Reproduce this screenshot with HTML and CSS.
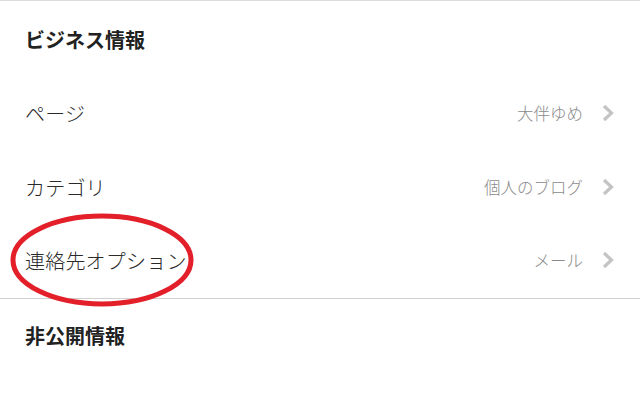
FILE: index.html
```html
<!DOCTYPE html>
<html lang="ja">
  <head>
    <meta charset="UTF-8" />
    <meta name="viewport" content="width=device-width, initial-scale=1.0" />
    <title>ビジネス情報</title>
    <link rel="stylesheet" href="styles.css">
  </head>
  <body>
    <div class="settings">
      <h2 class="section-title">ビジネス情報</h2>
      <div class="row">
        <span class="label">ページ</span>
        <span class="value">大伴ゆめ</span>
        <svg class="chevron" viewBox="0 0 12 18"><path d="M2 2 L9.5 9 L2 16" /></svg>
      </div>
      <div class="row">
        <span class="label">カテゴリ</span>
        <span class="value">個人のブログ</span>
        <svg class="chevron" viewBox="0 0 12 18"><path d="M2 2 L9.5 9 L2 16" /></svg>
      </div>
      <div class="row last">
        <span class="label">連絡先オプション</span>
        <span class="value">メール</span>
        <svg class="chevron" viewBox="0 0 12 18"><path d="M2 2 L9.5 9 L2 16" /></svg>
        <svg class="circle" viewBox="0 0 186 96">
          <ellipse cx="93" cy="48" rx="89" ry="44" />
        </svg>
      </div>
      <h2 class="section-title private">非公開情報</h2>
    </div>
  </body>
</html>
```

FILE: styles.css
```css
* {
  box-sizing: border-box;
  margin: 0;
  padding: 0;
}

body {
  font-family: "Noto Sans CJK JP", "Noto Sans", sans-serif;
  background: #fff;
  color: #333;
  width: 640px;
  height: 400px;
  overflow: hidden;
}

.settings {
  border-top: 1px solid #dcdcdc;
}

.section-title {
  font-size: 20px;
  font-weight: bold;
  color: #222;
  height: 75px;
  line-height: 78px;
  padding-left: 25px;
}

.section-title.private {
  line-height: 74px;
}

.row {
  position: relative;
  display: flex;
  align-items: center;
  height: 74px;
  padding: 0 26px 0 25px;
}

.row.last {
  height: 75px;
  padding-bottom: 2px;
  border-bottom: 1px solid #d0d0d0;
}

.label {
  flex: 1;
  font-size: 20px;
  font-weight: 300;
  color: #2a2a2a;
  letter-spacing: 0.2px;
}

.value {
  font-size: 16.5px;
  font-weight: 300;
  color: #8a8a8a;
  margin-right: 19px;
}

.chevron {
  width: 12px;
  height: 18px;
}

.chevron path {
  fill: none;
  stroke: #c4c4c4;
  stroke-width: 3.2;
}

.circle {
  position: absolute;
  left: 9px;
  top: -12px;
  width: 186px;
  height: 96px;
}

.circle ellipse {
  fill: none;
  stroke: #e3202a;
  stroke-width: 5;
}
```
